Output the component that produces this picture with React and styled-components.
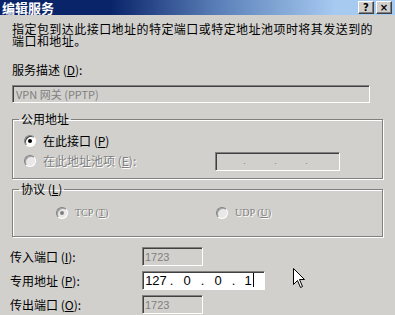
import React from 'react';
import styled, { createGlobalStyle } from 'styled-components';

const FACE = '#d1d0cd';

const GlobalStyle = createGlobalStyle`
  html, body {
    margin: 0;
    padding: 0;
    background: ${FACE};
  }
  body {
    font-family: "Noto Sans CJK SC", "Liberation Sans", sans-serif;
    font-size: 12px;
    color: #000;
  }
`;

const Window = styled.div`
  position: relative;
  width: 395px;
  height: 315px;
  background: ${FACE};
`;

const TitleBar = styled.div`
  box-sizing: border-box;
  width: 395px;
  height: 15px;
  display: flex;
  align-items: center;
  justify-content: space-between;
  padding: 0 3px 0 2px;
  background: linear-gradient(to right, #0a246a 0%, #0a246a 28%, #5a7fb8 55%, #a6caf0 85%);
`;

const Title = styled.span`
  color: #fff;
  font-weight: 700;
  font-size: 13px;
  line-height: 15px;
  height: 15px;
`;

const TitleButtons = styled.div`
  display: flex;
  gap: 2px;
`;

const TitleButton = styled.div`
  width: 16px;
  height: 13px;
  box-sizing: border-box;
  background: ${FACE};
  border-top: 1px solid #fff;
  border-left: 1px solid #fff;
  border-right: 1px solid #404040;
  border-bottom: 1px solid #404040;
  box-shadow: inset -1px -1px 0 #808080;
  display: flex;
  align-items: center;
  justify-content: center;
  font-family: "DejaVu Sans", sans-serif;
  font-weight: 700;
  font-size: 10px;
  line-height: 11px;
  color: #000;
`;

const Body = styled.div`
  padding: 8px 0 0 12px;
`;

const Intro = styled.p`
  margin: 0;
  line-height: 12px;
  letter-spacing: 0.45px;
`;

const FieldLabel = styled.div`
  margin-top: 16px;
  line-height: 14px;
`;

const Sunken = styled.div`
  box-sizing: border-box;
  border: 1px solid;
  border-color: #808080 #fff #fff #808080;
  box-shadow: inset 1px 1px 0 #404040;
  background: ${p => (p.$disabled ? FACE : '#fff')};
  display: flex;
  align-items: center;
`;

const ServiceInput = styled(Sunken)`
  margin-top: 8px;
  width: 358px;
  height: 18px;
  padding-left: 3px;
  font-size: 11px;
  color: #808080;
`;

const Group = styled.fieldset`
  box-sizing: border-box;
  width: 371px;
  height: ${p => p.$h}px;
  margin: ${p => p.$mt}px 0 0 0;
  padding: 0;
  border: 1px solid #808080;
  box-shadow: inset 1px 1px 0 #fff, 1px 1px 0 #fff;
`;

const Legend = styled.legend`
  margin-left: 6px;
  padding: 0 2px;
  line-height: 14px;
`;

const RadioRow = styled.div`
  display: flex;
  align-items: center;
  height: 20px;
  padding-left: 11px;
`;

const RadioList = styled.div`
  padding-top: 5px;
`;

const ProtocolRow = styled.div`
  display: grid;
  grid-template-columns: 160px 160px;
  padding: 10px 0 0 43px;
`;

const Option = styled.label`
  display: flex;
  align-items: center;
  gap: 7px;
  width: ${p => (p.$w ? `${p.$w}px` : 'auto')};
  line-height: 14px;
  color: ${p => (p.$disabled ? '#808080' : '#000')};
  text-shadow: ${p => (p.$disabled ? '1px 1px 0 #fff' : 'none')};
  font-size: ${p => (p.$small ? '10px' : '12px')};
  font-family: ${p =>
    p.$small ? '"Liberation Serif", "Noto Sans CJK SC", serif' : 'inherit'};
`;

const RadioCircle = styled.span`
  flex: none;
  width: 12px;
  height: 12px;
  box-sizing: border-box;
  border-radius: 50%;
  border: 1px solid;
  border-color: #808080 #fff #fff #808080;
  box-shadow: inset 1px 1px 0 ${p => (p.$disabled ? '#a0a0a0' : '#404040')};
  background: ${p => (p.$disabled ? '#e8e8e8' : '#fff')};
  display: flex;
  align-items: center;
  justify-content: center;

  &::after {
    content: '';
    display: ${p => (p.$checked ? 'block' : 'none')};
    width: 4px;
    height: 4px;
    border-radius: 50%;
    background: ${p => (p.$disabled ? '#808080' : '#000')};
  }
`;

const IpBox = styled(Sunken)`
  width: ${p => p.$w}px;
  height: 19px;
  padding-left: 1px;
  font-family: "Liberation Sans", sans-serif;
  font-size: 13px;
  color: ${p => (p.$disabled ? '#808080' : '#000')};
`;

const Seg = styled.span`
  width: 24px;
  text-align: center;
`;

const Dot = styled.span`
  width: 7px;
  text-align: center;
  font-size: ${p => (p.$disabled ? '9px' : '13px')};
`;

const Caret = styled.span`
  display: inline-block;
  width: 1px;
  height: 14px;
  background: #000;
  vertical-align: -2px;
  margin-left: 1px;
`;

const PortRows = styled.div`
  margin-top: 10px;
  display: flex;
  flex-direction: column;
  gap: 5px;
`;

const PortRow = styled.div`
  display: flex;
  align-items: center;
  margin-left: -2px;
`;

const PortLabel = styled.span`
  width: 132px;
  line-height: 14px;
`;

const PortInput = styled(Sunken)`
  width: 61px;
  height: 19px;
  padding-left: 2px;
  font-family: "Liberation Sans", sans-serif;
  font-size: 11px;
  color: #808080;
`;

const Cursor = styled.svg`
  position: absolute;
  left: 293px;
  top: 268px;
`;

const IpField = ({ parts, disabled, width, caret }) => (
  <IpBox $disabled={disabled} $w={width}>
    {parts.map((p, i) => (
      <React.Fragment key={i}>
        {i > 0 && <Dot $disabled={disabled}>.</Dot>}
        <Seg>
          {p}
          {caret && i === parts.length - 1 && <Caret />}
        </Seg>
      </React.Fragment>
    ))}
  </IpBox>
);

const App = () => (
  <Window>
    <GlobalStyle />
    <TitleBar>
      <Title>编辑服务</Title>
      <TitleButtons>
        <TitleButton>?</TitleButton>
        <TitleButton>×</TitleButton>
      </TitleButtons>
    </TitleBar>
    <Body>
      <Intro>
        指定包到达此接口地址的特定端口或特定地址池项时将其发送到的
        <br />
        端口和地址。
      </Intro>
      <FieldLabel>服务描述 (<u>D</u>):</FieldLabel>
      <ServiceInput $disabled>VPN 网关 (PPTP)</ServiceInput>

      <Group $h={67} $mt={9}>
        <Legend>公用地址</Legend>
        <RadioList>
          <RadioRow>
            <Option>
              <RadioCircle $checked />
              <span>在此接口 (<u>P</u>)</span>
            </Option>
          </RadioRow>
          <RadioRow>
            <Option $disabled $w={191}>
              <RadioCircle $disabled />
              <span>在此地址池项 (<u>E</u>):</span>
            </Option>
            <IpField parts={['', '', '', '']} disabled width={125} />
          </RadioRow>
        </RadioList>
      </Group>

      <Group $h={55} $mt={3}>
        <Legend>协议 (<u>L</u>)</Legend>
        <ProtocolRow>
          <Option $disabled $small>
            <RadioCircle $disabled $checked />
            <span>TCP (<u>T</u>)</span>
          </Option>
          <Option $disabled $small>
            <RadioCircle $disabled />
            <span>UDP (<u>U</u>)</span>
          </Option>
        </ProtocolRow>
      </Group>

      <PortRows>
        <PortRow>
          <PortLabel>传入端口 (<u>I</u>):</PortLabel>
          <PortInput $disabled>1723</PortInput>
        </PortRow>
        <PortRow>
          <PortLabel>专用地址 (<u>P</u>):</PortLabel>
          <IpField parts={['127', '0', '0', '1']} width={123} caret />
        </PortRow>
        <PortRow>
          <PortLabel>传出端口 (<u>O</u>):</PortLabel>
          <PortInput $disabled>1723</PortInput>
        </PortRow>
      </PortRows>
    </Body>

    <Cursor width="14" height="22" viewBox="0 0 14 22">
      <path
        d="M0.5 0.5 L0.5 16.5 L4.5 12.5 L7.5 19.5 L9.5 18.5 L6.5 11.5 L11.5 11.5 Z"
        fill="#fff"
        stroke="#000"
        strokeWidth="1"
      />
    </Cursor>
  </Window>
);

export default App;
